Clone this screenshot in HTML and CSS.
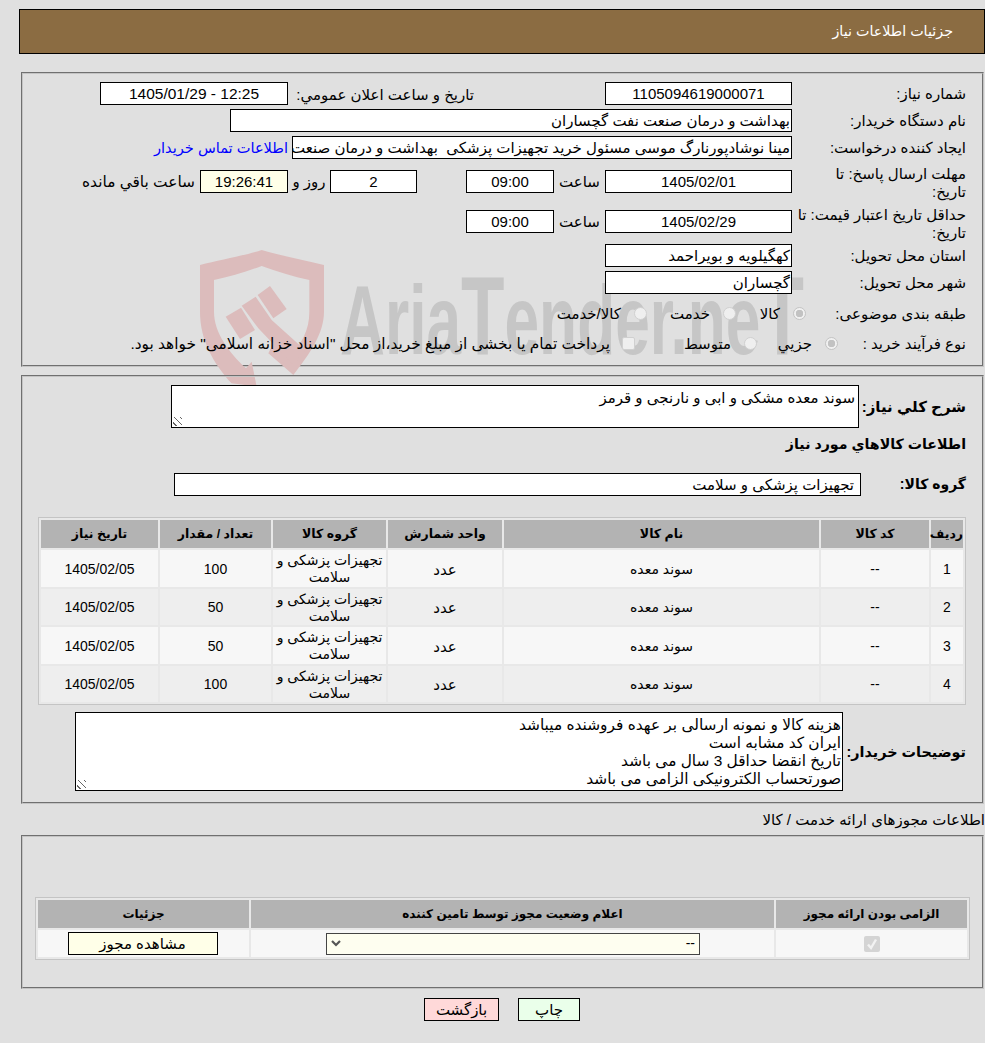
FILE: index.html
```html
<!DOCTYPE html>
<html lang="fa" dir="rtl">
<head>
<meta charset="utf-8">
<title>جزئیات اطلاعات نیاز</title>
<link rel="stylesheet" href="styles.css">
</head>
<body>
<header class="page-title">جزئیات اطلاعات نیاز</header>

<section class="panel panel-info">
  <div class="watermark" aria-hidden="true">
    <svg class="shield" viewBox="0 0 420 450" width="140" height="150">
      <path fill-rule="evenodd" d="M30 75 C90 60 170 45 215 30 C265 45 340 60 402 75 V215 C402 280 360 340 310 405 L235 340 L250 310 L300 350 C335 310 358 270 358 215 V120 C310 110 260 95 215 78 C170 95 120 110 72 120 V215 C72 280 120 340 168 385 L185 365 L200 440 L125 430 C70 370 30 300 30 215 Z"/>
      <path d="M107 230 L153 203 L195 270 L150 297 Z"/>
      <path d="M155 197 L197 170 L245 240 L345 330 L310 375 L205 265 Z"/>
      <path d="M203 165 L240 138 L290 207 L250 235 Z"/>
    </svg>
    <span class="wm-text">Aria<span class="wm-cap">T</span>ender.ne<span class="wm-cap">T</span></span>
  </div>

  <div class="row row-1">
    <label class="lbl">شماره نیاز:</label>
    <div class="box box-m center">1105094619000071</div>
    <span class="lbl-2">تاریخ و ساعت اعلان عمومي:</span>
    <div class="box box-date center"><span dir="ltr">1405/01/29 - 12:25</span></div>
  </div>
  <div class="row row-2">
    <label class="lbl">نام دستگاه خریدار:</label>
    <div class="box box-xl">بهداشت و درمان صنعت نفت گچساران</div>
  </div>
  <div class="row row-3">
    <label class="lbl">ایجاد کننده درخواست:</label>
    <div class="box box-l clip">مینا نوشادپورنارگ موسی مسئول خرید تجهیزات پزشکی&nbsp; بهداشت و درمان صنعت نفت گچساران</div>
    <a class="link" href="#">اطلاعات تماس خریدار</a>
  </div>
  <div class="row row-4">
    <label class="lbl lbl-wrap">مهلت ارسال پاسخ: تا<br>تاریخ:</label>
    <div class="box box-m center">1405/02/01</div>
    <span class="word word-time">ساعت</span>
    <div class="box box-s center">09:00</div>
    <div class="box box-d center days">2</div>
    <span class="word word-day">روز و</span>
    <div class="box box-s center remain">19:26:41</div>
    <span class="word word-left">ساعت باقي مانده</span>
  </div>
  <div class="row row-5">
    <label class="lbl lbl-wrap">حداقل تاریخ اعتبار قیمت: تا<br>تاریخ:</label>
    <div class="box box-m center">1405/02/29</div>
    <span class="word word-time">ساعت</span>
    <div class="box box-s center">09:00</div>
  </div>
  <div class="row row-6">
    <label class="lbl">استان محل تحویل:</label>
    <div class="box box-m">کهگیلویه و بویراحمد</div>
  </div>
  <div class="row row-7">
    <label class="lbl">شهر محل تحویل:</label>
    <div class="box box-m">گچساران</div>
  </div>
  <div class="row row-8">
    <label class="lbl">طبقه بندی موضوعی:</label>
    <span class="radio-set">
      <span class="radio checked"></span><span class="opt opt-a">کالا</span>
      <span class="radio"></span><span class="opt opt-b">خدمت</span>
      <span class="radio"></span><span class="opt">کالا/خدمت</span>
    </span>
  </div>
  <div class="row row-9">
    <label class="lbl">نوع فرآیند خرید :</label>
    <span class="radio-set">
      <span class="radio checked"></span><span class="opt opt-c">جزیي</span>
      <span class="radio"></span><span class="opt opt-d">متوسط</span>
      <span class="check-off"></span><span class="opt opt-long">پرداخت تمام یا بخشی از مبلغ خرید،از محل "اسناد خزانه اسلامی" خواهد بود.</span>
    </span>
  </div>
</section>

<section class="panel panel-items">
  <div class="desc-row">
    <label class="lbl-b">شرح کلي نیاز:</label>
    <div class="area area-desc">سوند معده مشکی و ابی و نارنجی و قرمز<span class="grip"></span></div>
  </div>
  <h2 class="lbl-b items-title">اطلاعات کالاهاي مورد نیاز</h2>
  <div class="group-row">
    <label class="lbl-b">گروه کالا:</label>
    <div class="box box-group">تجهیزات پزشکی و سلامت</div>
  </div>
  <div class="table-wrap table-items">
    <table>
      <colgroup><col class="c1"><col class="c2"><col class="c3"><col class="c4"><col class="c5"><col class="c6"><col class="c7"></colgroup>
      <thead><tr><th>ردیف</th><th>کد کالا</th><th>نام کالا</th><th>واحد شمارش</th><th>گروه کالا</th><th>تعداد / مقدار</th><th>تاریخ نیاز</th></tr></thead>
      <tbody>
        <tr><td>1</td><td>--</td><td>سوند معده</td><td>عدد</td><td>تجهیزات پزشکی و سلامت</td><td>100</td><td>1405/02/05</td></tr>
        <tr><td>2</td><td>--</td><td>سوند معده</td><td>عدد</td><td>تجهیزات پزشکی و سلامت</td><td>50</td><td>1405/02/05</td></tr>
        <tr><td>3</td><td>--</td><td>سوند معده</td><td>عدد</td><td>تجهیزات پزشکی و سلامت</td><td>50</td><td>1405/02/05</td></tr>
        <tr><td>4</td><td>--</td><td>سوند معده</td><td>عدد</td><td>تجهیزات پزشکی و سلامت</td><td>100</td><td>1405/02/05</td></tr>
      </tbody>
    </table>
  </div>
  <div class="notes-row">
    <label class="lbl-b">توضیحات خریدار:</label>
    <div class="area area-notes">هزینه کالا و نمونه ارسالی بر عهده فروشنده میباشد<br>ایران کد مشابه است<br>تاریخ انقضا حداقل 3 سال می باشد<br>صورتحساب الکترونیکی الزامی می باشد<span class="grip"></span></div>
  </div>
</section>

<div class="license-title">اطلاعات مجوزهای ارائه خدمت / کالا</div>

<section class="panel panel-license">
  <div class="table-wrap table-license">
    <table>
      <colgroup><col class="l1"><col class="l2"><col class="l3"></colgroup>
      <thead><tr><th>الزامی بودن ارائه مجوز</th><th>اعلام وضعیت مجوز توسط تامین کننده</th><th>جزئیات</th></tr></thead>
      <tbody>
        <tr>
          <td><span class="checkbox"><svg viewBox="0 0 16 16" width="16" height="16"><path d="M4 8.5 L7 12 L12 3.5" fill="none" stroke="#f2f2f2" stroke-width="2.4"/></svg></span></td>
          <td><div class="select"><svg class="chev" viewBox="0 0 10 7" width="10" height="7"><path d="M1 1 L5 5 L9 1" fill="none" stroke="#555" stroke-width="2.2"/></svg><span>--</span></div></td>
          <td class="view-cell"><button class="btn btn-view" type="button">مشاهده مجوز</button></td>
        </tr>
      </tbody>
    </table>
  </div>
</section>

<div class="actions">
  <button class="btn btn-print" type="button">چاپ</button>
  <button class="btn btn-back" type="button">بازگشت</button>
</div>
</body>
</html>
```
FILE: styles.css
```css
* { box-sizing: border-box; }
html, body { height: 100%; }
body {
  margin: 0;
  padding: 9px 0 0 0;
  background: #e0e0e0;
  color: #000;
  font: 15px/17px "Liberation Sans", "DejaVu Sans", sans-serif;
  overflow: hidden;
}
.page-title {
  margin: 0 0 0 19px;
  height: 45px;
  background: #8b6c42;
  border: 1px solid #000;
  color: #fff;
  padding: 13px 31px 0 0;
  font-size: 14.3px;
}
.panel {
  position: relative;
  border: 2px groove #c4c4c4;
  margin: 0 1px 0 21px;
}
.panel-info { margin-top: 18px; height: 295px; padding-top: 8px; }
.panel-items { margin-top: 8px; height: 429px; }
.panel-license { margin-top: 6px; height: 154px; padding: 60px 12px 0 0; }

.watermark { position: absolute; top: 166px; left: 167px; width: 640px; height: 150px; pointer-events: none; direction: ltr; z-index: 0; }
.shield { position: absolute; left: 0; top: 0; fill: #dcbcbc; }
.wm-text { position: absolute; left: 150px; top: 26px; font: bold 98px/100px "Liberation Sans", sans-serif; color: #c6c6c6; transform: scaleX(.635); transform-origin: left top; white-space: nowrap; }
.wm-cap { font-size: 112px; }

.row { position: relative; display: flex; align-items: flex-start; padding-right: 15px; z-index: 1; }
.lbl { flex: 0 0 175px; padding-top: 3px; padding-right: 1px; }
.lbl-wrap { padding-top: 0; line-height: 18px; margin-top: -5px; }
.row-5 .lbl-wrap { margin-top: -4px; }
.lbl-2 { width: 317px; padding-top: 4px; padding-right: 131px; white-space: nowrap; }
.row-1 { height: 27px; }
.row-2 { height: 27px; }
.row-3 { height: 34px; }
.row-4 { height: 40px; }
.row-5 { height: 34px; }
.row-6 { height: 27px; }
.row-7 { height: 27px; }
.row-8 { height: 30px; align-items: center; }
.row-9 { height: 30px; align-items: center; }
.row-8 .lbl, .row-9 .lbl { padding-top: 0; }
.row-8 .lbl { flex-basis: 161px; }
.row-9 .lbl { flex-basis: 129px; }

.box { height: 23px; border: 1px solid #000; background: #fff; line-height: 21px; white-space: nowrap; overflow: hidden; padding: 0 1px; }
.center { text-align: center; }
.box-m { width: 187px; }
.box-date { width: 188px; font-size: 15.5px; }
.box-s { width: 88px; }
.box-d { width: 87px; }
.box-l { width: 500px; }
.box-xl { width: 562px; }
.clip { flex: none; }
.link { color: #00f; text-decoration: none; padding: 4px 4px 0 0; white-space: nowrap; font-size: 14.6px; }
.word { padding-top: 3px; white-space: nowrap; }
.word-time { width: 51px; text-align: center; }
.word-day { width: 42px; text-align: center; }
.days { margin-right: 49px; }
.remain { background: #ffffe8; }
.word-left { padding-right: 5px; font-size: 15.4px; }

.radio-set { display: flex; align-items: center; white-space: nowrap; }
.radio { width: 13px; height: 13px; border-radius: 50%; background: #efefef; border: 1px solid #d0d0d0; margin-left: 13px; flex: none; }
.radio.checked { background: radial-gradient(circle, #c2c2c2 0 3.5px, #f0f0f0 4px); border-color: #c4c4c4; }
.check-off { width: 13px; height: 13px; border-radius: 2px; background: #efefef; border: 1px solid #d0d0d0; margin-left: 12px; flex: none; }
.opt-a { width: 44px; }
.opt-b { width: 63px; }
.opt-c { width: 55px; }
.opt-d { width: 96px; }
.opt-long { font-size: 15.4px; }

.lbl-b { font-weight: bold; margin: 0; font-size: 15px; }
.desc-row { display: flex; height: 56px; padding: 8px 16px 0 0; position: relative; z-index: 1; }
.desc-row .lbl-b { width: 107px; padding-top: 13px; white-space: nowrap; }
.area { position: relative; border: 1px solid #000; background: #fff; padding: 3px; }
.area-desc { width: 688px; height: 43px; }
.area-notes { width: 768px; height: 79px; padding: 3px 1px 0; line-height: 18px; font-size: 15.4px; }
.grip { position: absolute; left: 1px; bottom: 1px; width: 9px; height: 9px; background: repeating-linear-gradient(45deg, transparent 0 2px, #666 2px 3px, transparent 3px 4.5px); }
.items-title { padding: 1px 16px 0 0; height: 40px; line-height: 20px; position: relative; z-index: 1; font-size: 14.2px; }
.group-row { display: flex; height: 44px; padding-right: 16px; align-items: flex-start; position: relative; z-index: 1; }
.group-row .lbl-b { width: 105px; padding-top: 3px; font-size: 14px; }
.box-group { width: 687px; padding: 0 6px; }
.table-wrap { border: 1px solid #c4c4c4; background: #e8e8e8; position: relative; z-index: 1; }
.table-items { margin: 0 16px 0 0; width: 928px; }
.table-license { width: 935px; }
table { border-collapse: separate; border-spacing: 2px; table-layout: fixed; width: 100%; }
th { background: #b3b3b3; height: 28px; padding: 0; font-size: 12.5px; font-weight: bold; text-align: center; }
.table-license th { font-size: 12px; }
td { background: #f7f7f7; height: 37px; padding: 1px 2px 0; text-align: center; line-height: 17px; font-size: 14px; }
tbody tr:nth-child(even) td { background: #eeeeee; height: 36px; }
.table-items td:nth-child(3), .table-items td:nth-child(5) { padding: 1px 0 0; }
.table-items td:nth-child(4) { font-size: 15px; }
.c1 { width: 32px; } .c2 { width: 108px; } .c3 { width: 315px; } .c4 { width: 114px; }
.c5 { width: 113px; } .c6 { width: 111px; } .c7 { width: 117px; }
.l1 { width: 191px; } .l2 { width: 523px; } .l3 { width: 211px; }
.table-license td { height: 27px; padding: 0 2px; }
.table-license .view-cell { padding: 0 4px 0 2px; }
.notes-row { display: flex; padding: 7px 16px 0 0; position: relative; z-index: 1; }
.notes-row .lbl-b { width: 123px; padding-top: 32px; white-space: nowrap; font-size: 14.4px; }
.license-title { padding: 7px 0 0 0; height: 25px; white-space: nowrap; }
.checkbox { display: inline-block; width: 16px; height: 16px; background: #d4d4d4; border-radius: 2px; vertical-align: middle; }
.checkbox svg { display: block; }
.select { display: flex; justify-content: space-between; align-items: center; width: 374px; height: 22px; border: 1px solid #444; background: #fefef0; padding: 0 4px; direction: ltr; margin-right: 72px; }
.btn { font: 15px/17px "Liberation Sans", "DejaVu Sans", sans-serif; border: 1px solid #000; color: #000; padding: 0; height: 23px; }
.btn-view { width: 150px; background: #ffffe8; display: block; margin: 0 auto; }
.actions { display: flex; justify-content: center; gap: 19px; padding-top: 9px; padding-left: 19px; }
.btn-print { width: 62px; background: #eaffea; }
.btn-back { width: 75px; background: #ffd9d9; }
```
